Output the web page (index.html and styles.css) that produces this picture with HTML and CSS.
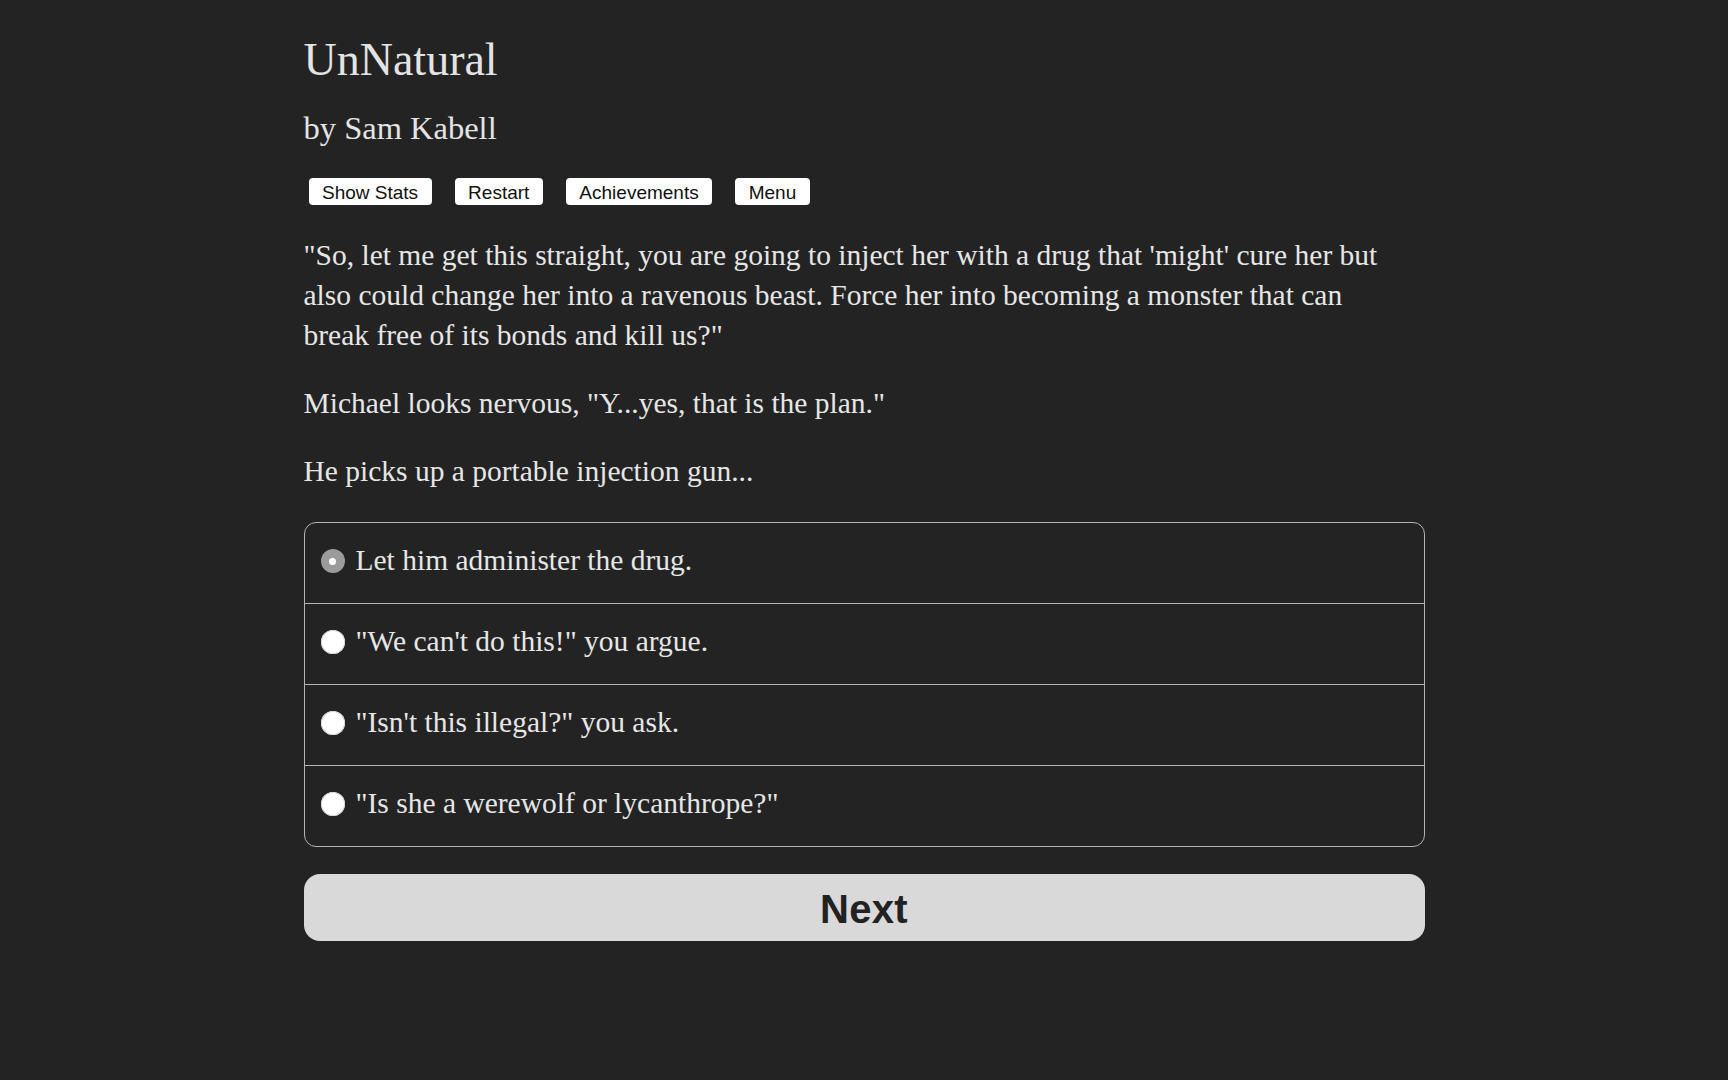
FILE: index.html
```html
<!DOCTYPE html>
<html lang="en">
<head>
<meta charset="utf-8">
<title>UnNatural</title>
<link rel="stylesheet" href="styles.css">
</head>
<body>
<main class="page">
  <h1 class="title">UnNatural</h1>
  <h2 class="byline">by Sam Kabell</h2>
  <div class="toolbar">
    <button class="tool-btn">Show Stats</button>
    <button class="tool-btn">Restart</button>
    <button class="tool-btn">Achievements</button>
    <button class="tool-btn">Menu</button>
  </div>
  <div class="story">
    <p>"So, let me get this straight, you are going to inject her with a drug that 'might' cure her but also could change her into a ravenous beast. Force her into becoming a monster that can break free of its bonds and kill us?"</p>
    <p>Michael looks nervous, "Y...yes, that is the plan."</p>
    <p>He picks up a portable injection gun...</p>
  </div>
  <div class="choices">
    <label class="choice">
      <span class="radio radio-checked"></span>
      <span class="choice-text">Let him administer the drug.</span>
    </label>
    <label class="choice">
      <span class="radio"></span>
      <span class="choice-text">"We can't do this!" you argue.</span>
    </label>
    <label class="choice">
      <span class="radio"></span>
      <span class="choice-text">"Isn't this illegal?" you ask.</span>
    </label>
    <label class="choice">
      <span class="radio"></span>
      <span class="choice-text">"Is she a werewolf or lycanthrope?"</span>
    </label>
  </div>
  <button class="next-btn">Next</button>
</main>
</body>
</html>
```
FILE: styles.css
```css
html, body {
  margin: 0;
  padding: 0;
  background: #232323;
}

body {
  color: #e6e6e6;
  font-family: "Liberation Serif", "Times New Roman", serif;
  min-height: 1080px;
}

.page {
  width: 1121px;
  margin: 0 auto;
  padding-top: 33px;
}

.title {
  margin: 0;
  font-size: 46px;
  line-height: 54px;
  font-weight: normal;
  color: #e4e4e4;
}

.byline {
  margin: 21px 0 0;
  font-size: 32.5px;
  line-height: 40px;
  font-weight: normal;
  color: #e4e4e4;
}

.toolbar {
  display: flex;
  gap: 23px;
  margin: 30px 0 0 5px;
}

.tool-btn {
  height: 27px;
  padding: 0 13.5px;
  border: none;
  border-radius: 4px;
  background: #ffffff;
  color: #111;
  font-family: "Liberation Sans", Arial, sans-serif;
  font-size: 19px;
  line-height: 29px;
}

.story {
  margin-top: 30px;
  padding-right: 22px;
  font-size: 29.5px;
  line-height: 40px;
}

.story p {
  margin: 0 0 28px;
}

.story p:last-child {
  margin-bottom: 0;
}

.choices {
  margin-top: 31px;
  border: 1px solid #b4b4b4;
  border-radius: 12px;
  overflow: hidden;
}

.choice {
  display: flex;
  align-items: center;
  height: 80px;
  padding-left: 16px;
  box-sizing: border-box;
}

.choice + .choice {
  border-top: 1px solid #b4b4b4;
  height: 81px;
}

.radio {
  width: 24px;
  height: 24px;
  margin-bottom: 4px;
  border-radius: 50%;
  background: #ffffff;
  box-shadow: inset 0 0 0 1px #d8d8d8;
  flex: none;
  position: relative;
}

.radio-checked {
  background: #9b9b9b;
  box-shadow: none;
}

.radio-checked::after {
  content: "";
  position: absolute;
  left: 8.5px;
  top: 8.5px;
  width: 7px;
  height: 7px;
  border-radius: 50%;
  background: #ffffff;
}

.choice-text {
  margin-left: 11px;
  font-size: 29.5px;
  line-height: 40px;
  margin-bottom: 6px;
}

.next-btn {
  display: block;
  box-sizing: border-box;
  width: 100%;
  height: 67px;
  margin-top: 27px;
  border: none;
  border-radius: 16px;
  background: #d9d9d9;
  color: #222;
  font-family: "Liberation Sans", Arial, sans-serif;
  font-weight: bold;
  font-size: 40px;
  letter-spacing: 0.3px;
  line-height: 63px;
  padding: 4px 0 0;
}
```
